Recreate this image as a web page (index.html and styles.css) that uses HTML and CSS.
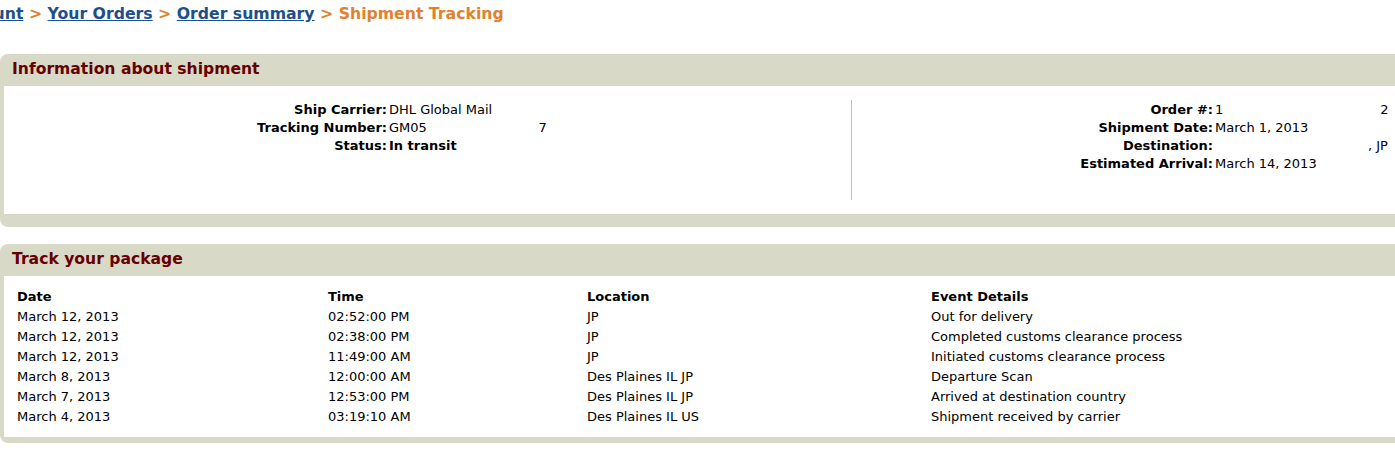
FILE: index.html
```html
<!DOCTYPE html>
<html>
<head>
<meta charset="utf-8">
<title>Shipment Tracking</title>
<link rel="stylesheet" href="styles.css">
</head>
<body>
<div class="page">
  <div class="crumbs">
    <a class="crumb-link crumb-first" href="#">Your Account</a>
    <span class="sep">&gt;</span>
    <a class="crumb-link" href="#">Your Orders</a>
    <span class="sep">&gt;</span>
    <a class="crumb-link" href="#">Order summary</a>
    <span class="sep">&gt;</span>
    <span class="crumb-current">Shipment Tracking</span>
  </div>

  <div class="panel panel-info">
    <div class="panel-head">Information about shipment</div>
    <div class="panel-body info-body">
      <div class="info-half info-left">
        <div class="info-grid grid-left">
          <div class="lbl">Ship Carrier:</div><div class="val">DHL Global Mail</div>
          <div class="lbl">Tracking Number:</div><div class="val">GM05<span class="blur">&nbsp;&nbsp;&nbsp;&nbsp;&nbsp;&nbsp;&nbsp;&nbsp;&nbsp;&nbsp;&nbsp;&nbsp;&nbsp;&nbsp;&nbsp;&nbsp;&nbsp;&nbsp;&nbsp;&nbsp;&nbsp;&nbsp;&nbsp;&nbsp;&nbsp;&nbsp;&nbsp;</span>7</div>
          <div class="lbl">Status:</div><div class="val val-bold">In transit</div>
        </div>
      </div>
      <div class="info-half info-right">
        <div class="info-grid grid-right">
          <div class="lbl">Order #:</div><div class="val">1<span class="blur">&nbsp;&nbsp;&nbsp;&nbsp;&nbsp;&nbsp;&nbsp;&nbsp;&nbsp;&nbsp;&nbsp;&nbsp;&nbsp;&nbsp;&nbsp;&nbsp;&nbsp;&nbsp;&nbsp;&nbsp;&nbsp;&nbsp;&nbsp;&nbsp;&nbsp;&nbsp;&nbsp;&nbsp;&nbsp;&nbsp;&nbsp;&nbsp;&nbsp;&nbsp;&nbsp;&nbsp;&nbsp;&nbsp;</span>2</div>
          <div class="lbl">Shipment Date:</div><div class="val">March 1, 2013</div>
          <div class="lbl">Destination:</div><div class="val"><span class="blur">&nbsp;&nbsp;&nbsp;&nbsp;&nbsp;&nbsp;&nbsp;&nbsp;&nbsp;&nbsp;&nbsp;&nbsp;&nbsp;&nbsp;&nbsp;&nbsp;&nbsp;&nbsp;&nbsp;&nbsp;&nbsp;&nbsp;&nbsp;&nbsp;&nbsp;&nbsp;&nbsp;&nbsp;&nbsp;&nbsp;&nbsp;&nbsp;&nbsp;&nbsp;&nbsp;&nbsp;&nbsp;</span>, JP</div>
          <div class="lbl">Estimated Arrival:</div><div class="val">March 14, 2013</div>
        </div>
      </div>
    </div>
  </div>

  <div class="panel panel-track">
    <div class="panel-head">Track your package</div>
    <div class="panel-body track-body">
      <div class="track-grid">
        <div class="th">Date</div><div class="th">Time</div><div class="th">Location</div><div class="th">Event Details</div>
        <div>March 12, 2013</div><div>02:52:00 PM</div><div>JP</div><div>Out for delivery</div>
        <div>March 12, 2013</div><div>02:38:00 PM</div><div>JP</div><div>Completed customs clearance process</div>
        <div>March 12, 2013</div><div>11:49:00 AM</div><div>JP</div><div>Initiated customs clearance process</div>
        <div>March 8, 2013</div><div>12:00:00 AM</div><div>Des Plaines IL JP</div><div>Departure Scan</div>
        <div>March 7, 2013</div><div>12:53:00 PM</div><div>Des Plaines IL JP</div><div>Arrived at destination country</div>
        <div>March 4, 2013</div><div>03:19:10 AM</div><div>Des Plaines IL US</div><div>Shipment received by carrier</div>
      </div>
    </div>
  </div>
</div>
</body>
</html>
```

FILE: styles.css
```css
html, body {
  margin: 0;
  padding: 0;
  background: #ffffff;
  overflow: hidden;
}

body {
  font-family: "DejaVu Sans", Verdana, sans-serif;
  font-size: 13px;
  color: #000000;
}

.page {
  width: calc(100% + 20px);
}

.crumbs {
  font-weight: bold;
  font-size: 15.7px;
  line-height: 18px;
  padding-top: 5px;
  margin-left: -93px;
  white-space: nowrap;
  height: 50px;
  box-sizing: border-box;
}

.crumb-link {
  color: #1d4f8a;
  text-decoration: underline;
}

.sep {
  color: #e1812e;
}

.crumb-current {
  color: #e1812e;
}

.panel {
  background: #d9d9c7;
  border-radius: 8px;
  padding-left: 4px;
}

.panel-info {
  margin-top: 4px;
  padding-bottom: 13px;
}

.panel-track {
  margin-top: 17px;
  padding-bottom: 6px;
}

.panel-head {
  height: 32px;
  line-height: 30px;
  padding-left: 8px;
  font-size: 15.6px;
  font-weight: bold;
  color: #660000;
}

.panel-body {
  background: #ffffff;
}

.info-body {
  display: flex;
  padding: 14px 0;
}

.info-half {
  height: 100px;
}

.info-left {
  width: 847px;
  border-right: 1px solid #c4c2ad;
}

.info-right {
  flex: 1;
}

.info-grid {
  display: grid;
  column-gap: 2px;
  line-height: 18px;
  padding-top: 1px;
}

.grid-left {
  grid-template-columns: 383px auto;
}

.grid-right {
  grid-template-columns: 361px auto;
}

.lbl {
  font-weight: bold;
  text-align: right;
}

.val {
  white-space: nowrap;
}

.val-bold {
  font-weight: bold;
}

.blur {
  color: transparent;
}

.track-body {
  padding: 11px 0 10px 13px;
}

.track-grid {
  display: grid;
  grid-template-columns: 311px 259px 344px 1fr;
  line-height: 20px;
}

.th {
  font-weight: bold;
}
```
